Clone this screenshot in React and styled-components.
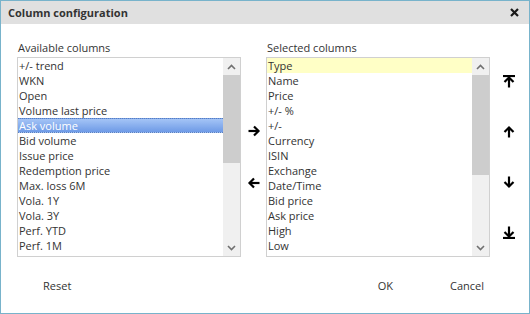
import styled, { createGlobalStyle } from "styled-components";

const GlobalStyle = createGlobalStyle`
  html, body {
    margin: 0;
    padding: 0;
    background: #ffffff;
  }
  body {
    font-family: "Open Sans", "Liberation Sans", sans-serif;
  }
`;

const available = [
  "+/- trend",
  "WKN",
  "Open",
  "Volume last price",
  "Ask volume",
  "Bid volume",
  "Issue price",
  "Redemption price",
  "Max. loss 6M",
  "Vola. 1Y",
  "Vola. 3Y",
  "Perf. YTD",
  "Perf. 1M",
];

const selected = [
  "Type",
  "Name",
  "Price",
  "+/- %",
  "+/-",
  "Currency",
  "ISIN",
  "Exchange",
  "Date/Time",
  "Bid price",
  "Ask price",
  "High",
  "Low",
];

const ArrowIcon = ({ dir = "right", bar }) => {
  const rot = { right: 0, down: 90, left: 180, up: 270 }[dir];
  return (
    <svg width="14" height="14" viewBox="0 0 14 14">
      <g transform={`rotate(${rot} 7 7)`} fill="none" stroke="#000" strokeWidth="2.2">
        <path d="M1.5 7h10" />
        <path d="M7 2.5l4.5 4.5L7 11.5" />
        {bar && <path d="M13 1v12" />}
      </g>
    </svg>
  );
};

const Chevron = ({ up }) => (
  <svg width="9" height="6" viewBox="0 0 9 6">
    <path
      d={up ? "M1 5l3.5-3.5L8 5" : "M1 1l3.5 3.5L8 1"}
      fill="none"
      stroke="#707070"
      strokeWidth="1.6"
    />
  </svg>
);

const CloseIcon = () => (
  <svg width="9" height="9" viewBox="0 0 9 9">
    <path d="M1 1l7 7M8 1L1 8" stroke="#1a1a1a" strokeWidth="2.2" />
  </svg>
);

const ListBox = ({ items, active, mark, thumbHeight }) => (
  <StList>
    <StRows>
      {items.map((item, i) => (
        <StRow key={item} $active={i === active} $mark={i === mark}>
          {item}
        </StRow>
      ))}
    </StRows>
    <StScrollbar>
      <StScrollBtn>
        <Chevron up />
      </StScrollBtn>
      <StTrack>
        <StThumb $height={thumbHeight} />
      </StTrack>
      <StScrollBtn>
        <Chevron />
      </StScrollBtn>
    </StScrollbar>
  </StList>
);

const App = () => {
  return (
    <>
      <GlobalStyle />
      <StDialog>
        <StHeader>
          <StTitle>Column configuration</StTitle>
          <CloseIcon />
        </StHeader>
        <StBody>
          <StColumn>
            <StLabel>Available columns</StLabel>
            <ListBox items={available} active={4} thumbHeight={88} />
          </StColumn>
          <StMover>
            <ArrowIcon dir="right" />
            <ArrowIcon dir="left" />
          </StMover>
          <StColumn>
            <StLabel>Selected columns</StLabel>
            <ListBox items={selected} mark={0} thumbHeight={100} />
          </StColumn>
          <StOrder>
            <ArrowIcon dir="up" bar />
            <ArrowIcon dir="up" />
            <ArrowIcon dir="down" />
            <ArrowIcon dir="down" bar />
          </StOrder>
        </StBody>
        <StFooter>
          <StButton>Reset</StButton>
          <StSpacer />
          <StButton>OK</StButton>
          <StButton $gap>Cancel</StButton>
        </StFooter>
      </StDialog>
    </>
  );
};

export default App;

const StDialog = styled.div`
  width: 530px;
  height: 314px;
  box-sizing: border-box;
  border: 1px solid #78b3cb;
  display: flex;
  flex-direction: column;
  background: #fff;
  color: #333;
`;

const StHeader = styled.div`
  height: 23px;
  background: #e0e0e0;
  display: flex;
  align-items: center;
  justify-content: space-between;
  padding: 0 10px 0 7px;
`;

const StTitle = styled.div`
  font-size: 11px;
  font-weight: 700;
  color: #333;
`;

const StBody = styled.div`
  display: flex;
  padding: 16px 0 0 16px;
`;

const StColumn = styled.div`
  display: flex;
  flex-direction: column;
  width: 224px;
`;

const StLabel = styled.div`
  font-size: 11px;
  line-height: 15px;
  height: 15px;
  margin-bottom: 2px;
  padding-left: 1px;
`;

const StList = styled.div`
  height: 200px;
  box-sizing: border-box;
  border: 1px solid #d0d0d0;
  display: flex;
`;

const StRows = styled.div`
  flex: 1;
  overflow: hidden;
`;

const StRow = styled.div`
  height: 15px;
  font-size: 11px;
  padding-left: 1px;
  white-space: nowrap;
  box-sizing: border-box;
  color: ${(p) => (p.$active ? "#fff" : "#333")};
  background: ${(p) =>
    p.$active
      ? "linear-gradient(#a4c4f6, #6e9ae6)"
      : p.$mark
      ? "#ffffc6"
      : "transparent"};
  border-top: ${(p) => (p.$active ? "1px dotted #5a7fbf" : "none")};
  border-bottom: ${(p) => (p.$active ? "1px dotted #5a7fbf" : "none")};
  line-height: ${(p) => (p.$active ? "13px" : "15px")};
`;

const StScrollbar = styled.div`
  width: 17px;
  background: #f0f0f0;
  display: flex;
  flex-direction: column;
`;

const StScrollBtn = styled.div`
  height: 17px;
  display: flex;
  align-items: center;
  justify-content: center;
`;

const StTrack = styled.div`
  flex: 1;
`;

const StThumb = styled.div`
  height: ${(p) => p.$height}px;
  background: #cdcdcd;
`;

const StMover = styled.div`
  width: 25px;
  padding-top: 17px;
  height: 200px;
  display: flex;
  flex-direction: column;
  align-items: center;
  justify-content: center;
  gap: 38px;
`;

const StOrder = styled.div`
  width: 26px;
  margin-left: 6px;
  padding-top: 17px;
  height: 200px;
  display: flex;
  flex-direction: column;
  align-items: center;
  justify-content: space-around;
`;

const StFooter = styled.div`
  flex: 1;
  display: flex;
  align-items: center;
  padding: 0 45px 0 42px;
`;

const StSpacer = styled.div`
  flex: 1;
`;

const StButton = styled.div`
  font-size: 11px;
  font-weight: 500;
  color: #333;
  margin-left: ${(p) => (p.$gap ? "57px" : "0")};
`;
